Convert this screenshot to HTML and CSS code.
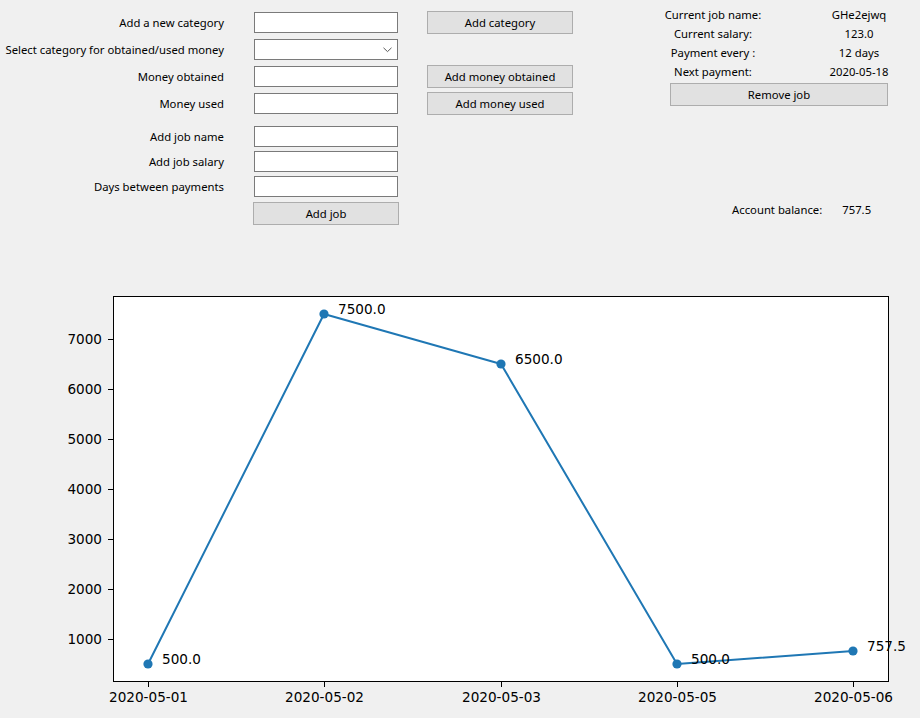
FILE: index.html
```html
<!DOCTYPE html>
<html>
<head>
<meta charset="utf-8">
<title>Budget</title>
<link rel="stylesheet" href="styles.css">
</head>
<body>
<div class="top">
  <div class="form">
    <div class="row r1">
      <label class="lbl">Add a new category</label>
      <input class="entry" type="text">
      <button class="btn">Add category</button>
    </div>
    <div class="row r2">
      <label class="lbl">Select category for obtained/used money</label>
      <div class="select">
        <svg class="chev" width="9" height="6" viewBox="0 0 9 6"><path d="M0.5 0.8 L4.5 4.6 L8.5 0.8" fill="none" stroke="#5a5a5a" stroke-width="1"/></svg>
      </div>
    </div>
    <div class="row r3">
      <label class="lbl">Money obtained</label>
      <input class="entry" type="text">
      <button class="btn">Add money obtained</button>
    </div>
    <div class="row r4">
      <label class="lbl">Money used</label>
      <input class="entry" type="text">
      <button class="btn">Add money used</button>
    </div>
    <div class="row r5">
      <label class="lbl">Add job name</label>
      <input class="entry" type="text">
    </div>
    <div class="row r6">
      <label class="lbl">Add job salary</label>
      <input class="entry" type="text">
    </div>
    <div class="row r7">
      <label class="lbl">Days between payments</label>
      <input class="entry" type="text">
    </div>
    <div class="row r8">
      <span class="lbl"></span>
      <button class="btn btn-job">Add job</button>
    </div>
  </div>
  <div class="info">
    <div class="info-grid">
      <span>Current job name:</span><span>GHe2ejwq</span>
      <span>Current salary:</span><span>123.0</span>
      <span>Payment every :</span><span>12 days</span>
      <span>Next payment:</span><span>2020-05-18</span>
    </div>
    <button class="btn btn-remove">Remove job</button>
    <div class="balance"><span>Account balance:</span><span class="bal-val">757.5</span></div>
  </div>
</div>
<svg class="chart" width="920" height="478" viewBox="0 0 920 478">
  <rect x="113.5" y="56.5" width="775" height="385" fill="#ffffff" stroke="#000000" stroke-width="1"/>
  <g stroke="#000000" stroke-width="1">
    <line x1="108" y1="99.5" x2="113" y2="99.5"/>
    <line x1="108" y1="149.5" x2="113" y2="149.5"/>
    <line x1="108" y1="199.5" x2="113" y2="199.5"/>
    <line x1="108" y1="249.5" x2="113" y2="249.5"/>
    <line x1="108" y1="299.5" x2="113" y2="299.5"/>
    <line x1="108" y1="349.5" x2="113" y2="349.5"/>
    <line x1="108" y1="399.5" x2="113" y2="399.5"/>
    <line x1="148.5" y1="442" x2="148.5" y2="447"/>
    <line x1="324.5" y1="442" x2="324.5" y2="447"/>
    <line x1="501.5" y1="442" x2="501.5" y2="447"/>
    <line x1="677.5" y1="442" x2="677.5" y2="447"/>
    <line x1="853.5" y1="442" x2="853.5" y2="447"/>
  </g>
  <g class="tick-y">
    <text x="102" y="104">7000</text>
    <text x="102" y="154">6000</text>
    <text x="102" y="204">5000</text>
    <text x="102" y="254">4000</text>
    <text x="102" y="304">3000</text>
    <text x="102" y="354">2000</text>
    <text x="102" y="404">1000</text>
  </g>
  <g class="tick-x">
    <text x="148.5" y="461.5">2020-05-01</text>
    <text x="324.5" y="461.5">2020-05-02</text>
    <text x="501.5" y="461.5">2020-05-03</text>
    <text x="677.5" y="461.5">2020-05-05</text>
    <text x="853.5" y="461.5">2020-05-06</text>
  </g>
  <polyline points="148,424 324,74 501,124 677,424 853,411" fill="none" stroke="#1f77b4" stroke-width="2" stroke-linejoin="round"/>
  <g fill="#1f77b4">
    <circle cx="148" cy="424" r="4.6"/>
    <circle cx="324" cy="74" r="4.6"/>
    <circle cx="501" cy="124" r="4.6"/>
    <circle cx="677" cy="424" r="4.6"/>
    <circle cx="853" cy="411" r="4.6"/>
  </g>
  <g class="annot">
    <text x="162" y="424">500.0</text>
    <text x="338" y="74">7500.0</text>
    <text x="515" y="124">6500.0</text>
    <text x="691" y="424">500.0</text>
    <text x="867" y="411">757.5</text>
  </g>
</svg>
</body>
</html>
```

FILE: styles.css
```css
html, body {
  margin: 0;
  padding: 0;
  background: #f0f0f0;
  overflow: hidden;
}
body {
  font-family: "Noto Sans", "Open Sans", sans-serif;
  font-size: 11.3px;
  color: #000000;
  width: 920px;
  height: 718px;
}
.top {
  display: flex;
  align-items: flex-start;
  height: 225px;
}
.form {
  flex: none;
  width: 573px;
}
.row {
  display: flex;
  align-items: center;
  height: 23px;
  line-height: 23px;
}
.r1 { margin-top: 11px; }
.r2, .r3, .r4, .r8 { margin-top: 4px; }
.r5 { margin-top: 10px; }
.r6, .r7 { margin-top: 2px; }
.lbl {
  flex: none;
  width: 224px;
  text-align: right;
  white-space: nowrap;
}
.entry, .select {
  flex: none;
  box-sizing: border-box;
  width: 144px;
  height: 21px;
  margin: 0 0 0 30px;
  padding: 0;
  border: 1px solid #7a7a7a;
  background: #ffffff;
  outline: none;
}
.select {
  position: relative;
}
.chev {
  position: absolute;
  right: 5px;
  top: 7px;
}
.btn {
  flex: none;
  box-sizing: border-box;
  width: 146px;
  height: 23px;
  margin: 0 0 0 29px;
  padding: 0;
  border: 1px solid #adadad;
  background: #e1e1e1;
  font-family: inherit;
  font-size: 11.3px;
  color: #000000;
  line-height: 21px;
}
.btn-job {
  margin-left: 29px;
}
.info {
  flex: none;
  margin-left: 75px;
  width: 244px;
}
.info-grid {
  display: grid;
  grid-template-columns: 130px 64px;
  column-gap: 49px;
  padding-top: 5px;
  line-height: 19px;
  text-align: center;
  white-space: nowrap;
}
.btn-remove {
  display: block;
  width: 218px;
  margin: 2px 0 0 22px;
}
.balance {
  display: flex;
  gap: 20px;
  margin: 94px 0 0 84px;
  line-height: 19px;
  white-space: nowrap;
}
.chart {
  display: block;
  margin-top: 15px;
}
.chart text {
  font-family: "DejaVu Sans", sans-serif;
  font-size: 13.6px;
  fill: #000000;
}
.tick-y text {
  text-anchor: end;
}
.tick-x text {
  text-anchor: middle;
}
```
